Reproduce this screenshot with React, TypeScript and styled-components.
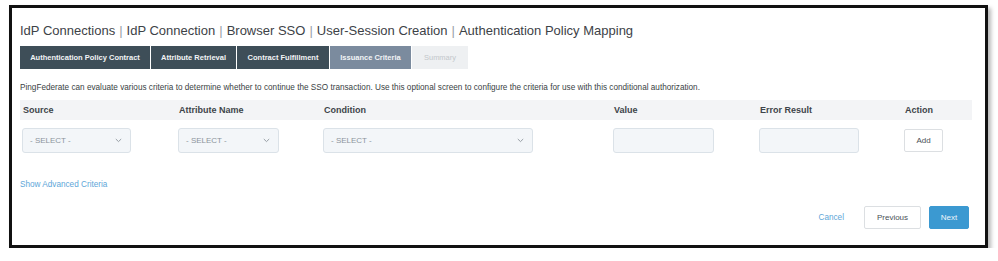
import { FC } from "react";
import styled, { createGlobalStyle } from "styled-components";

const GlobalStyle = createGlobalStyle`
  html, body {
    margin: 0;
    padding: 0;
    background: #ffffff;
  }
  body {
    font-family: "Liberation Sans", Arial, sans-serif;
    color: #333;
  }
`;

const Frame = styled.div`
  margin: 5px 0 0 9px;
  width: 979px;
  height: 243px;
  box-sizing: border-box;
  border: 3px solid #111;
  box-shadow: 3px 3px 4px rgba(0, 0, 0, 0.28);
  background: #fff;
  padding: 14px 0 0 8px;
  display: flex;
  flex-direction: column;
`;

const Title = styled.h1`
  margin: 0;
  font-size: 13px;
  font-weight: 400;
  color: #3d4247;
  line-height: 18px;
  display: flex;
  align-items: center;
  .sep {
    color: #9aa0a6;
    margin: 0 4px;
  }
`;

const Tabs = styled.div`
  display: flex;
  gap: 1px;
  margin-top: 6px;
  height: 23px;
`;

type TabState = "done" | "active" | "todo";

const Tab = styled.div<{ $state: TabState; $w: number }>`
  width: ${(p) => p.$w}px;
  display: flex;
  align-items: center;
  justify-content: center;
  font-size: 7.5px;
  background: ${(p) =>
    p.$state === "done" ? "#3e4e58" : p.$state === "active" ? "#7b8b9e" : "#eef0f2"};
  color: ${(p) => (p.$state === "todo" ? "#c3c7cb" : "#f2f4f6")};
  font-weight: ${(p) => (p.$state === "todo" ? 400 : 700)};
`;

const Description = styled.p`
  margin: 14px 0 0;
  font-size: 8.2px;
  line-height: 10px;
  color: #3a3f44;
`;

const Grid = styled.div`
  display: grid;
  grid-template-columns: 158px 145px 290px 146px 145px 68px;
  width: 952px;
`;

const HeaderRow = styled(Grid)`
  margin-top: 7px;
  height: 20px;
  background: #f3f4f6;
  align-items: center;
`;

const HeaderCell = styled.div`
  padding-left: 1px;
  font-size: 9px;
  font-weight: 700;
  color: #3e444a;
  &:first-child {
    padding-left: 3px;
  }
`;

const InputRow = styled(Grid)`
  margin-top: 7px;
  height: 26px;
  align-items: center;
`;

const Cell = styled.div`
  &:first-child {
    padding-left: 2px;
  }
`;

const Field = styled.div<{ $w: number }>`
  width: ${(p) => p.$w}px;
  height: 25px;
  box-sizing: border-box;
  border: 1px solid #dbe2e8;
  border-radius: 3px;
  background: #f3f6f9;
  display: flex;
  align-items: center;
  justify-content: space-between;
  padding: 0 8px 0 7px;
  font-size: 8px;
  color: #8c949c;
`;

const Chevron = () => (
  <svg width="7" height="5" viewBox="0 0 7 5">
    <path d="M0.8 1 L3.5 3.6 L6.2 1" fill="none" stroke="#8c949c" strokeWidth="0.9" />
  </svg>
);

const Button = styled.button<{ $primary?: boolean; $w: number }>`
  width: ${(p) => p.$w}px;
  height: 23px;
  box-sizing: border-box;
  border: 1px solid ${(p) => (p.$primary ? "#3b99d1" : "#dcdfe2")};
  border-radius: 2px;
  background: ${(p) => (p.$primary ? "#3b99d1" : "#fff")};
  color: ${(p) => (p.$primary ? "#eef6fb" : "#4a5056")};
  font-family: "Liberation Sans", Arial, sans-serif;
  font-size: 8px;
  padding: 0;
  cursor: pointer;
`;

const Link = styled.a`
  color: #5ea6d8;
  font-size: 8.2px;
  text-decoration: none;
  cursor: pointer;
`;

const AdvancedLink = styled(Link)`
  margin-top: 27px;
  align-self: flex-start;
`;

const Footer = styled.div`
  margin-top: 17px;
  width: 949px;
  display: flex;
  justify-content: flex-end;
  align-items: center;
  gap: 8px;
  ${Link} {
    margin-right: 12px;
  }
`;

const crumbs = [
  "IdP Connections",
  "IdP Connection",
  "Browser SSO",
  "User-Session Creation",
  "Authentication Policy Mapping",
];

const tabs: { label: string; w: number; state: TabState }[] = [
  { label: "Authentication Policy Contract", w: 130, state: "done" },
  { label: "Attribute Retrieval", w: 85, state: "done" },
  { label: "Contract Fulfillment", w: 92, state: "done" },
  { label: "Issuance Criteria", w: 81, state: "active" },
  { label: "Summary", w: 56, state: "todo" },
];

const columns = ["Source", "Attribute Name", "Condition", "Value", "Error Result", "Action"];

const App: FC = () => {
  return (
    <>
      <GlobalStyle />
      <Frame>
        <Title>
          {crumbs.map((c, i) => (
            <span key={c}>
              {i > 0 && <span className="sep">|</span>}
              {c}
            </span>
          ))}
        </Title>
        <Tabs>
          {tabs.map((t) => (
            <Tab key={t.label} $state={t.state} $w={t.w}>
              {t.label}
            </Tab>
          ))}
        </Tabs>
        <Description>
          PingFederate can evaluate various criteria to determine whether to continue the SSO
          transaction. Use this optional screen to configure the criteria for use with this
          conditional authorization.
        </Description>
        <HeaderRow>
          {columns.map((c) => (
            <HeaderCell key={c}>{c}</HeaderCell>
          ))}
        </HeaderRow>
        <InputRow>
          <Cell>
            <Field $w={109}>
              - SELECT -
              <Chevron />
            </Field>
          </Cell>
          <Cell>
            <Field $w={101}>
              - SELECT -
              <Chevron />
            </Field>
          </Cell>
          <Cell>
            <Field $w={210}>
              - SELECT -
              <Chevron />
            </Field>
          </Cell>
          <Cell>
            <Field $w={101} />
          </Cell>
          <Cell>
            <Field $w={100} />
          </Cell>
          <Cell>
            <Button $w={39}>Add</Button>
          </Cell>
        </InputRow>
        <AdvancedLink>Show Advanced Criteria</AdvancedLink>
        <Footer>
          <Link>Cancel</Link>
          <Button $w={57}>Previous</Button>
          <Button $w={40} $primary>
            Next
          </Button>
        </Footer>
      </Frame>
    </>
  );
};

export default App;
